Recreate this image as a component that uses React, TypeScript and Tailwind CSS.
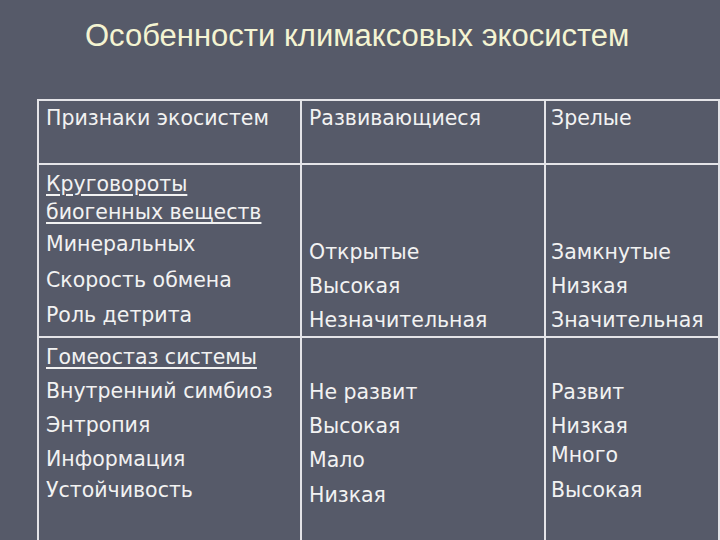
import React from 'react'

type Line = { text: string; h: number; u?: boolean }

const cell = 'border-r-2 border-b-2 border-[#e4e4e8] flex flex-col'

function Lines({ items, pt, pl }: { items: Line[]; pt: string; pl: string }) {
  return (
    <div className={`${pt} ${pl}`}>
      {items.map((l, i) => (
        <div key={i} className="whitespace-nowrap" style={{ height: l.h, lineHeight: `${l.h}px` }}>
          <span className={l.u ? 'underline decoration-2 underline-offset-[3px]' : ''}>{l.text}</span>
        </div>
      ))}
    </div>
  )
}

export default function App() {
  return (
    <div
      className="w-[720px] h-[540px] overflow-hidden bg-[#565a69] text-[#f2f2f2]"
      style={{ fontFamily: '"DejaVu Sans", Verdana, sans-serif' }}
    >
      {/* title */}
      <div className="h-[99px] pl-[85px] pt-[16px]">
        <h1
          className="whitespace-nowrap text-[31px] leading-[40px] text-[#f4f4d2]"
          style={{ fontFamily: '"Liberation Sans", Arial, sans-serif' }}
        >
          Особенности климаксовых экосистем
        </h1>
      </div>

      {/* table */}
      <div className="ml-[37px] grid grid-cols-[263px_244px_174px] grid-rows-[64px_173px_220px] border-l-2 border-t-2 border-[#e4e4e8] text-[20.5px]">
        <div className={cell}>
          <Lines pt="pt-0" pl="pl-[7px]" items={[{ text: 'Признаки экосистем', h: 34 }]} />
        </div>
        <div className={cell}>
          <Lines pt="pt-0" pl="pl-[7px]" items={[{ text: 'Развивающиеся', h: 34 }]} />
        </div>
        <div className={cell}>
          <Lines pt="pt-0" pl="pl-[5px]" items={[{ text: 'Зрелые', h: 34 }]} />
        </div>

        <div className={cell}>
          <Lines
            pt="pt-[5px]"
            pl="pl-[7px]"
            items={[
              { text: 'Круговороты', h: 28, u: true },
              { text: 'биогенных веществ', h: 28, u: true },
              { text: 'Минеральных', h: 36 },
              { text: 'Скорость обмена', h: 36 },
              { text: 'Роль детрита', h: 34 },
            ]}
          />
        </div>
        <div className={cell}>
          <Lines
            pt="pt-[70px]"
            pl="pl-[7px]"
            items={[
              { text: 'Открытые', h: 34 },
              { text: 'Высокая', h: 34 },
              { text: 'Незначительная', h: 34 },
            ]}
          />
        </div>
        <div className={cell}>
          <Lines
            pt="pt-[70px]"
            pl="pl-[5px]"
            items={[
              { text: 'Замкнутые', h: 34 },
              { text: 'Низкая', h: 34 },
              { text: 'Значительная', h: 34 },
            ]}
          />
        </div>

        <div className={cell}>
          <Lines
            pt="pt-[2px]"
            pl="pl-[7px]"
            items={[
              { text: 'Гомеостаз системы', h: 34, u: true },
              { text: 'Внутренний симбиоз', h: 34 },
              { text: 'Энтропия', h: 34 },
              { text: 'Информация', h: 35 },
              { text: 'Устойчивость', h: 26 },
            ]}
          />
        </div>
        <div className={cell}>
          <Lines
            pt="pt-[37px]"
            pl="pl-[7px]"
            items={[
              { text: 'Не развит', h: 34 },
              { text: 'Высокая', h: 34 },
              { text: 'Мало', h: 35 },
              { text: 'Низкая', h: 34 },
            ]}
          />
        </div>
        <div className={cell}>
          <Lines
            pt="pt-[37px]"
            pl="pl-[5px]"
            items={[
              { text: 'Развит', h: 34 },
              { text: 'Низкая', h: 34 },
              { text: 'Много', h: 24 },
              { text: 'Высокая', h: 46 },
            ]}
          />
        </div>
      </div>
    </div>
  )
}
